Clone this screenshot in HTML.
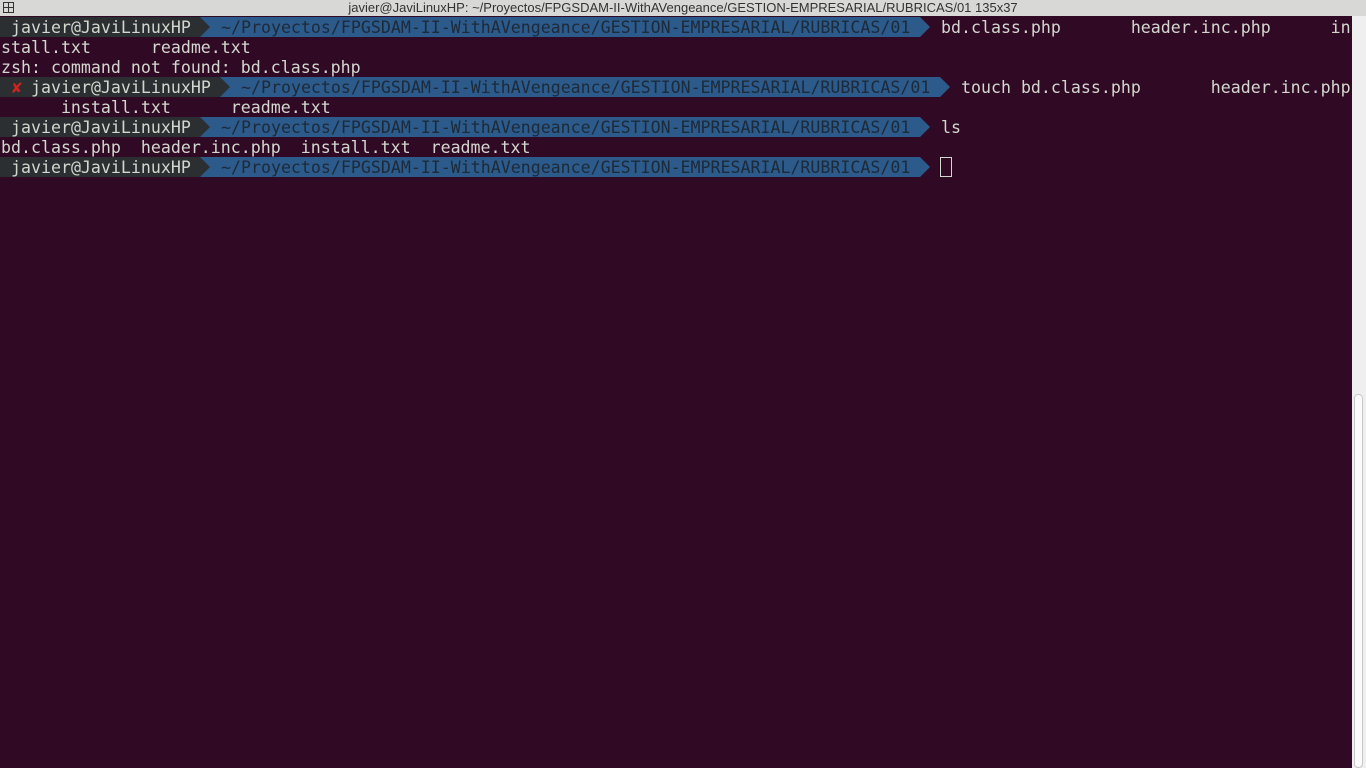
<!DOCTYPE html>
<html><head><meta charset="utf-8"><style>
html,body{margin:0;padding:0;width:1366px;height:768px;overflow:hidden;background:#300a24;}
#title{position:absolute;left:0;top:0;width:1366px;height:16px;background:#d8d8d6;font:13px "Liberation Sans",sans-serif;color:#333;text-align:center;line-height:15px;}
#ico{position:absolute;left:3px;top:2px;width:11px;height:11px;border:1px solid #333;box-sizing:border-box;}
#ico:before{content:"";position:absolute;left:4px;top:0;width:1px;height:9px;background:#333}
#ico:after{content:"";position:absolute;left:0;top:4px;width:9px;height:1px;background:#333}
#sb{position:absolute;left:1352px;top:16px;width:14px;height:752px;background:#efefef;}
#thumb{position:absolute;left:1354px;top:394px;width:9px;height:374px;background:#fbfbfb;border:1px solid #c8c8c8;border-radius:4px;box-sizing:border-box;}
.r{position:absolute;left:0;height:20px;width:1352px;}
.t{position:absolute;top:1px;margin-left:1px;font:16.6px "DejaVu Sans Mono",monospace;line-height:20px;color:#d3d7cf;white-space:pre;}
.d{position:absolute;top:0;height:20px;background:#2b2f31;}
.b{position:absolute;top:0;height:20px;background:#2c5a8a;}
.ar{position:absolute;top:0;width:0;height:0;border-top:10px solid transparent;border-bottom:10px solid transparent;}
.p{color:#1c2a3a;}
</style></head><body>
<div id="title"><div id="ico"></div>javier@JaviLinuxHP: ~/Proyectos/FPGSDAM-II-WithAVengeance/GESTION-EMPRESARIAL/RUBRICAS/01 135x37</div>

<div class="r" style="top:17px">
<div class="d" style="left:0;width:200px"></div><div class="b" style="left:200px;width:720px"></div>
<div class="ar" style="left:200px;border-left:10px solid #2b2f31"></div>
<div class="ar" style="left:920px;border-left:10px solid #2c5a8a"></div>
<span class="t" style="left:10px">javier@JaviLinuxHP</span>
<span class="t p" style="left:220px">~/Proyectos/FPGSDAM-II-WithAVengeance/GESTION-EMPRESARIAL/RUBRICAS/01</span>
<span class="t" style="left:940px">bd.class.php       header.inc.php      in</span>
</div>
<div class="r" style="top:37px"><span class="t" style="left:0">stall.txt      readme.txt</span></div>
<div class="r" style="top:57px"><span class="t" style="left:0">zsh: command not found: bd.class.php</span></div>
<div class="r" style="top:77px">
<div class="d" style="left:0;width:220px"></div><div class="b" style="left:220px;width:720px"></div>
<div class="ar" style="left:220px;border-left:10px solid #2b2f31"></div>
<div class="ar" style="left:940px;border-left:10px solid #2c5a8a"></div>
<span class="t" style="left:11px;color:#d0231c;font-weight:bold">✘</span>
<span class="t" style="left:30px">javier@JaviLinuxHP</span>
<span class="t p" style="left:240px">~/Proyectos/FPGSDAM-II-WithAVengeance/GESTION-EMPRESARIAL/RUBRICAS/01</span>
<span class="t" style="left:960px">touch bd.class.php       header.inc.php</span>
</div>
<div class="r" style="top:97px"><span class="t" style="left:0">      install.txt      readme.txt</span></div>
<div class="r" style="top:117px">
<div class="d" style="left:0;width:200px"></div><div class="b" style="left:200px;width:720px"></div>
<div class="ar" style="left:200px;border-left:10px solid #2b2f31"></div>
<div class="ar" style="left:920px;border-left:10px solid #2c5a8a"></div>
<span class="t" style="left:10px">javier@JaviLinuxHP</span>
<span class="t p" style="left:220px">~/Proyectos/FPGSDAM-II-WithAVengeance/GESTION-EMPRESARIAL/RUBRICAS/01</span>
<span class="t" style="left:940px">ls</span>
</div>
<div class="r" style="top:137px"><span class="t" style="left:0">bd.class.php  header.inc.php  install.txt  readme.txt</span></div>
<div class="r" style="top:157px">
<div class="d" style="left:0;width:200px"></div><div class="b" style="left:200px;width:720px"></div>
<div class="ar" style="left:200px;border-left:10px solid #2b2f31"></div>
<div class="ar" style="left:920px;border-left:10px solid #2c5a8a"></div>
<span class="t" style="left:10px">javier@JaviLinuxHP</span>
<span class="t p" style="left:220px">~/Proyectos/FPGSDAM-II-WithAVengeance/GESTION-EMPRESARIAL/RUBRICAS/01</span>
<div style="position:absolute;left:940px;top:0;width:12px;height:20px;border:1px solid #d3d7cf;box-sizing:border-box"></div>
</div>

<div id="sb"></div><div id="thumb"></div>
</body></html>
